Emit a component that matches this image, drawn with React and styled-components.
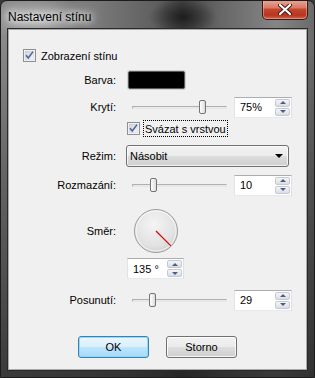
import React from 'react';
import styled, { createGlobalStyle } from 'styled-components';

const GlobalStyle = createGlobalStyle`
  html, body {
    margin: 0;
    padding: 0;
    width: 315px;
    height: 378px;
    overflow: hidden;
    background: #3a3a3a;
  }
  * {
    box-sizing: border-box;
  }
`;

const Window = styled.div`
  width: 315px;
  height: 378px;
  display: flex;
  flex-direction: column;
  padding: 0 7px 7px;
  border: 1px solid #1c1c1c;
  border-radius: 7px 7px 2px 2px;
  background:
    radial-gradient(ellipse 60px 30px at 35px 18px, rgba(210, 210, 210, 0.55), transparent 80%),
    radial-gradient(ellipse 40px 22px at 182px 16px, rgba(20, 20, 20, 0.8), transparent 85%),
    linear-gradient(to right, #8a8a8a 0%, #7a7a7a 30%, #5e5e5e 50%, #444 58%, #666 70%, #858585 88%, #6a6a6a 100%);
  font-family: "Liberation Sans", Arial, sans-serif;
  position: relative;
  overflow: hidden;

  &::after {
    content: '';
    position: absolute;
    left: 0;
    right: 0;
    top: 40px;
    bottom: 0;
    background: linear-gradient(to bottom, rgba(40, 40, 40, 0) 0%, rgba(30, 30, 30, 0.35) 40%, rgba(25, 25, 25, 0.7) 100%);
    pointer-events: none;
    z-index: 0;
  }
`;

const TitleBar = styled.div`
  height: 28px;
  flex: none;
  display: flex;
  justify-content: space-between;
  align-items: flex-start;
  margin: 0 -1px;
  position: relative;
  z-index: 1;
`;

const Title = styled.div`
  padding: 9px 0 0 1px;
  font-size: 12px;
  color: #000;
  text-shadow: 0 0 6px #fff, 0 0 10px #fff, 0 0 14px rgba(255, 255, 255, 0.9);
`;

const CloseButton = styled.div`
  width: 46px;
  height: 20px;
  margin-top: -1px;
  display: flex;
  align-items: center;
  justify-content: center;
  border: 1px solid #3b1a14;
  border-top: none;
  border-radius: 0 0 5px 5px;
  background: linear-gradient(to bottom, #e9a99b 0%, #d97a64 40%, #c3452c 50%, #b83520 80%, #d0664a 100%);
  box-shadow: inset 0 0 0 1px rgba(255, 200, 190, 0.45);
`;

const Client = styled.div`
  flex: 1;
  display: flex;
  flex-direction: column;
  padding-top: 17px;
  background: #f0f0f0;
  border: 1px solid #a9a9a9;
  outline: 1px solid #2a2a2a;
  position: relative;
  z-index: 1;
  font-size: 11px;
  color: #000;
`;

const CheckRow = styled.label`
  display: flex;
  align-items: center;
  gap: 3px;
  height: 16px;
  padding-left: ${p => p.$indent}px;
  margin-top: ${p => p.$mt || 0}px;
`;

const FocusText = styled.span`
  padding: 2px 1px 1px 1px;
  border: ${p => (p.$focus ? '1px dotted #000' : '1px solid transparent')};
`;

const Row = styled.div`
  display: grid;
  grid-template-columns: 107px 1fr;
  column-gap: 10px;
  align-items: ${p => p.$align || 'center'};
  margin-top: ${p => p.$mt || 0}px;
`;

const Label = styled.div`
  text-align: right;
  white-space: nowrap;
  padding-top: ${p => p.$pt || 0}px;
`;

const Controls = styled.div`
  display: flex;
  align-items: center;
  gap: 4px;
`;

const Swatch = styled.div`
  width: 57px;
  height: 18px;
  margin-left: 2px;
  background: #000;
  border: 1px solid #5a5a5a;
  border-radius: 2px;
  box-shadow: 0 0 0 1px #cfcfcf;
`;

const Slider = styled.div`
  width: 104px;
  height: 22px;
  position: relative;
  display: flex;
  align-items: center;
  padding: 0 3px 0 6px;
`;

const Track = styled.div`
  flex: 1;
  height: 3px;
  border: 1px solid #b0b0b0;
  border-bottom-color: #e6e6e6;
  border-right-color: #e6e6e6;
  background: #e9e9e9;
`;

const Thumb = styled.div`
  position: absolute;
  top: 4px;
  left: ${p => p.$x}px;
  width: 7px;
  height: 14px;
  border: 1px solid #747474;
  border-radius: 2px;
  background: linear-gradient(to right, #fdfdfd 0%, #ececec 60%, #d8d8d8 100%);
`;

const Spin = styled.div`
  width: ${p => p.$w || 58}px;
  height: 21px;
  display: flex;
  align-items: center;
  justify-content: space-between;
  background: #fff;
  border: 1px solid #abadb3;
  border-bottom-color: #e3e9ef;
  border-right-color: #dbdfe6;
  border-left-color: #e2e3ea;
  padding: 0 1px 0 5px;
`;

const SpinButtons = styled.div`
  display: flex;
  flex-direction: column;
  gap: 1px;
`;

const SpinButton = styled.div`
  width: 15px;
  height: 8px;
  display: flex;
  align-items: center;
  justify-content: center;
  border: 1px solid #c6c9cf;
  border-radius: 2px;
  background: linear-gradient(to bottom, #f5f6f7 0%, #e8eaee 50%, #d9dde3 100%);
`;

const Arrow = styled.div`
  width: 0;
  height: 0;
  border-left: 3px solid transparent;
  border-right: 3px solid transparent;
  ${p => (p.$down ? 'border-top: 3px solid #4a5d85;' : 'border-bottom: 3px solid #4a5d85;')}
`;

const Select = styled.div`
  width: 163px;
  height: 22px;
  display: flex;
  align-items: center;
  justify-content: space-between;
  padding: 0 5px 0 3px;
  border: 1px solid #707070;
  border-radius: 3px;
  background: linear-gradient(to bottom, #f2f2f2 0%, #ebebeb 50%, #dddddd 51%, #cfcfcf 100%);
  box-shadow: inset 0 0 0 1px rgba(255, 255, 255, 0.7);
`;

const Caret = styled.div`
  width: 0;
  height: 0;
  border-left: 4px solid transparent;
  border-right: 4px solid transparent;
  border-top: 4px solid #000;
`;

const DialColumn = styled.div`
  width: 57px;
  margin-left: 1px;
  display: flex;
  flex-direction: column;
  align-items: center;
  gap: 4px;
`;

const Dial = styled.svg`
  display: block;
`;

const ButtonRow = styled.div`
  display: flex;
  justify-content: center;
  gap: 17px;
  margin-top: 25px;
`;

const Button = styled.div`
  width: 71px;
  height: 22px;
  display: flex;
  align-items: center;
  justify-content: center;
  border: 1px solid ${p => (p.$primary ? '#3c7fb1' : '#707070')};
  border-radius: 3px;
  background: ${p =>
    p.$primary
      ? 'linear-gradient(to bottom, #eaf6fd 0%, #d9f0fc 50%, #bee6fd 51%, #a7d9f5 100%)'
      : 'linear-gradient(to bottom, #f2f2f2 0%, #ebebeb 50%, #dddddd 51%, #cfcfcf 100%)'};
  box-shadow: inset 0 0 0 1px ${p => (p.$primary ? 'rgba(140, 215, 250, 0.9)' : 'rgba(255, 255, 255, 0.8)')};
`;

const Checkbox = () => (
  <svg width="13" height="13" viewBox="0 0 13 13">
    <defs>
      <linearGradient id="cbg" x1="0" y1="0" x2="1" y2="1">
        <stop offset="0" stopColor="#cfd1d4" />
        <stop offset="1" stopColor="#f7f7f7" />
      </linearGradient>
    </defs>
    <rect x="0.5" y="0.5" width="12" height="12" fill="#fff" stroke="#8e8f8f" />
    <rect x="2" y="2" width="9" height="9" fill="url(#cbg)" stroke="#c0c3c8" strokeWidth="0.5" />
    <path d="M3 6.2 L5.3 9 L10 2.6" fill="none" stroke="#4a64a4" strokeWidth="1.6" />
  </svg>
);

const Spinner = ({ value, w }) => (
  <Spin $w={w}>
    <span>{value}</span>
    <SpinButtons>
      <SpinButton><Arrow /></SpinButton>
      <SpinButton><Arrow $down /></SpinButton>
    </SpinButtons>
  </Spin>
);

const SliderField = ({ thumb, value }) => (
  <Controls>
    <Slider>
      <Track />
      <Thumb $x={thumb} />
    </Slider>
    <Spinner value={value} />
  </Controls>
);

const CloseGlyph = () => (
  <svg width="14" height="11" viewBox="0 0 14 11">
    <path d="M2 1 L12 10 M12 1 L2 10" stroke="#3a1a12" strokeWidth="4" strokeLinecap="round" />
    <path d="M2 1 L12 10 M12 1 L2 10" stroke="#fff" strokeWidth="2.2" strokeLinecap="round" />
  </svg>
);

const App = () => {
  const angle = 135;
  const rad = ((angle - 90) * Math.PI) / 180;
  const lx = 22 + Math.cos(rad) * 21;
  const ly = 22 + Math.sin(rad) * 21;

  return (
    <>
      <GlobalStyle />
      <Window>
        <TitleBar>
          <Title>Nastavení stínu</Title>
          <CloseButton><CloseGlyph /></CloseButton>
        </TitleBar>
        <Client>
          <CheckRow $indent={14}>
            <Checkbox />
            <FocusText>Zobrazení stínu</FocusText>
          </CheckRow>

          <Row $mt={8}>
            <Label>Barva:</Label>
            <Controls><Swatch /></Controls>
          </Row>

          <Row $mt={7}>
            <Label>Krytí:</Label>
            <SliderField thumb={73} value="75%" />
          </Row>

          <CheckRow $indent={118} $mt={2}>
            <Checkbox />
            <FocusText $focus>Svázat s vrstvou</FocusText>
          </CheckRow>

          <Row $mt={9}>
            <Label>Režim:</Label>
            <Select>
              <span>Násobit</span>
              <Caret />
            </Select>
          </Row>

          <Row $mt={7}>
            <Label>Rozmazání:</Label>
            <SliderField thumb={24} value="10" />
          </Row>

          <Row $mt={12} $align="start">
            <Label $pt={17}>Směr:</Label>
            <DialColumn>
              <Dial width="46" height="46" viewBox="-1 -1 46 46">
                <defs>
                  <radialGradient id="dialg" cx="0.45" cy="0.35" r="0.7">
                    <stop offset="0" stopColor="#f4f4f4" />
                    <stop offset="0.7" stopColor="#e2e2e2" />
                    <stop offset="1" stopColor="#cfcfcf" />
                  </radialGradient>
                </defs>
                <circle cx="22" cy="22" r="21.5" fill="url(#dialg)" stroke="#9c9c9c" />
                <circle cx="22" cy="22" r="20" fill="none" stroke="#fff" strokeOpacity="0.7" />
                <line x1="22" y1="22" x2={lx} y2={ly} stroke="#e00000" strokeWidth="1.2" />
              </Dial>
              <Spinner value="135 °" w={57} />
            </DialColumn>
          </Row>

          <Row $mt={10}>
            <Label>Posunutí:</Label>
            <SliderField thumb={23} value="29" />
          </Row>

          <ButtonRow>
            <Button $primary>OK</Button>
            <Button>Storno</Button>
          </ButtonRow>
        </Client>
      </Window>
    </>
  );
};

export default App;
